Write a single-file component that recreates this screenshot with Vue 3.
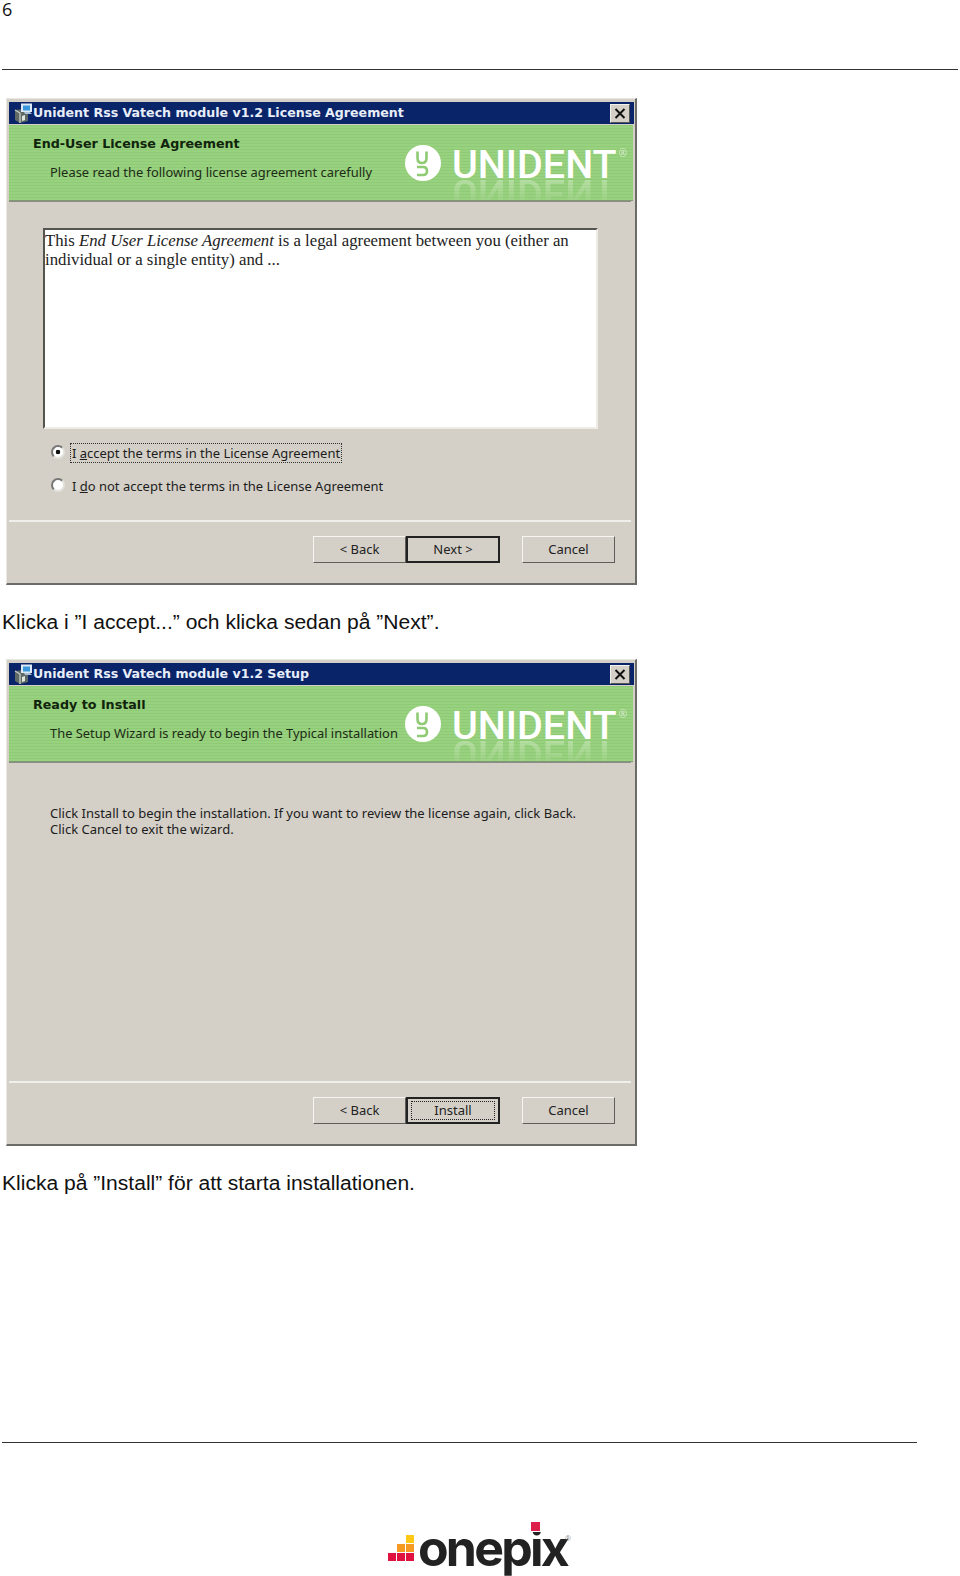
<template>
  <div class="page">
    <div class="page-head">6</div>

    <template v-for="d in dialogs" :key="d.title">
      <div class="dialog">
        <div class="titlebar">
          <svg class="titlebar__icon" width="20" height="20" viewBox="0 0 20 20">
            <path d="M2 7l8-1 5 3v9l-8 2-5-3z" fill="#5f6a66" />
            <path d="M2 7l5 3v10" fill="none" stroke="#c5cdc8" stroke-width="1.3" />
            <path d="M9 13l3-1v5l-3 1z" fill="#dfe6df" />
            <rect x="8" y="0.5" width="11" height="8.5" fill="#dce8f4" />
            <rect x="10" y="2.5" width="7" height="5" fill="#3b97dc" />
            <path d="M11 9h6l2 2h-7z" fill="#a9c0d6" />
          </svg>
          <span class="titlebar__text">{{ d.title }}</span>
          <button class="titlebar__close">
            <svg width="12" height="11" viewBox="0 0 12 11">
              <path d="M1.5 1l9 9M10.5 1l-9 9" stroke="#111" stroke-width="2" />
            </svg>
          </button>
        </div>

        <div class="banner">
          <div class="banner__text">
            <div class="banner__heading">{{ d.heading }}</div>
            <div class="banner__sub">{{ d.sub }}</div>
          </div>
          <div class="logo">
            <svg width="36" height="36" viewBox="0 0 36 36">
              <circle cx="18" cy="18" r="18" fill="#fff" />
              <path d="M12.5 6.5V13q0 5 4.5 5t4.5-5V6.5" fill="none" stroke="#8fca74" stroke-width="2.6" />
              <path d="M12 22h6q4 0 4 4t-4 4h-6" fill="none" stroke="#8fca74" stroke-width="2.6" />
            </svg>
            <div class="logo__word">UNIDENT</div>
            <sup class="logo__reg">®</sup>
          </div>
        </div>

        <div class="content">
          <template v-if="d.license">
            <div class="license">
              This <em>End User License Agreement</em> is a legal agreement between you (either an<br />
              individual or a single entity) and ...
            </div>
            <div class="radio-row radio-row--first">
              <span class="radio radio--on"></span>
              <span class="radio-label radio-label--focus">I <u>a</u>ccept the terms in the License Agreement</span>
            </div>
            <div class="radio-row">
              <span class="radio"></span>
              <span class="radio-label">I <u>d</u>o not accept the terms in the License Agreement</span>
            </div>
          </template>
          <div v-else class="message">
            Click Install to begin the installation. If you want to review the license again, click Back.<br />
            Click Cancel to exit the wizard.
          </div>
        </div>

        <div class="footer">
          <button class="btn">&lt; Back</button>
          <button class="btn btn--default">
            <span :class="{ 'btn__focus': !d.license }">{{ d.next }}</span>
          </button>
          <button class="btn btn--cancel">Cancel</button>
        </div>
      </div>
      <p class="caption">{{ d.caption }}</p>
    </template>

    <div class="page-foot"></div>
    <div class="brand">
      <div class="brand__bars">
        <i class="bar bar--y"></i>
        <i class="bar bar--o"></i><i class="bar bar--o"></i>
        <i class="bar bar--r"></i><i class="bar bar--r"></i><i class="bar bar--r"></i>
      </div>
      <div class="brand__word">onep<span class="brand__i">i<b class="brand__dot"></b></span>x</div>
      <span class="brand__reg">®</span>
    </div>
  </div>
</template>

<script setup>
const dialogs = [
  {
    title: 'Unident Rss Vatech module v1.2 License Agreement',
    heading: 'End-User License Agreement',
    sub: 'Please read the following license agreement carefully',
    license: true,
    next: 'Next >',
    caption: 'Klicka i ”I accept...” och klicka sedan på ”Next”.',
  },
  {
    title: 'Unident Rss Vatech module v1.2 Setup',
    heading: 'Ready to Install',
    sub: 'The Setup Wizard is ready to begin the Typical installation',
    license: false,
    next: 'Install',
    caption: 'Klicka på ”Install” för att starta installationen.',
  },
];
</script>

<style>
body {
  margin: 0;
  background: #fff;
}
</style>

<style scoped>
.page {
  width: 960px;
  height: 1576px;
  box-sizing: border-box;
  padding: 0 0 0 2px;
  font-family: "Liberation Sans", Arial, sans-serif;
  color: #111;
}
.page-head {
  width: 956px;
  height: 69px;
  border-bottom: 1px solid #333;
  margin-bottom: 28px;
  font-family: "Open Sans", sans-serif;
  font-size: 18px;
  line-height: 18px;
}
.dialog {
  width: 631px;
  height: 487px;
  margin-left: 4px;
  box-sizing: border-box;
  padding: 3px 1px 3px 2px;
  display: flex;
  flex-direction: column;
  background: #d4d0c8;
  border: 1px solid #e9e7e2;
  border-right: 2px solid #6b6b68;
  border-bottom: 2px solid #6b6b68;
  font-family: "Noto Sans", sans-serif;
  color: #1c1c1c;
}
.titlebar {
  height: 22px;
  flex: none;
  display: flex;
  align-items: center;
  background: #0a246a;
  color: #e8eef8;
  font-family: "DejaVu Sans", sans-serif;
  font-weight: 700;
  font-size: 12.6px;
}
.titlebar__icon {
  margin: 0 0 0 4px;
}
.titlebar__text {
  margin-top: -2px;
}
.titlebar__close {
  margin-left: auto;
  margin-right: 4px;
  width: 20px;
  height: 19px;
  padding: 0;
  display: flex;
  align-items: center;
  justify-content: center;
  background: #d4d0c8;
  border: 1px solid;
  border-color: #f2f1ed #555 #555 #f2f1ed;
}
.banner {
  height: 75px;
  flex: none;
  margin-top: 1px;
  margin-right: 1px;
  position: relative;
  overflow: hidden;
  display: flex;
  justify-content: space-between;
  background: repeating-linear-gradient(#8fca74 0 1px, #98d17f 1px 3px);
  border-bottom: 1px solid #7f9a72;
}
.banner__text {
  padding-left: 24px;
  white-space: nowrap;
}
.banner__heading {
  margin-top: 10px;
  font-family: "DejaVu Sans", sans-serif;
  font-weight: 700;
  font-size: 12.7px;
  line-height: 18px;
  color: #10240c;
}
.banner__sub {
  margin: 10px 0 0 17px;
  font-size: 12.9px;
  line-height: 18px;
  color: #1c2c16;
}
.logo {
  display: flex;
  align-items: flex-start;
  padding: 20px 6px 0 0;
  color: #fff;
}
.logo svg {
  margin-right: 11px;
}
.logo__word {
  position: relative;
  font-family: "Roboto", sans-serif;
  font-weight: 500;
  font-size: 39.5px;
  line-height: 40px;
}
.logo__word::after {
  content: "UNIDENT";
  position: absolute;
  left: 0;
  top: 0;
  transform-origin: 0 34px;
  transform: scaleY(-1);
  opacity: 0.3;
  -webkit-mask-image: linear-gradient(transparent 20%, #000 85%);
  mask-image: linear-gradient(transparent 20%, #000 85%);
}
.logo__reg {
  font-size: 10px;
  line-height: 10px;
  opacity: 0.6;
  margin: 3px 0 0 2px;
}
.content {
  flex: 1;
  min-height: 0;
  margin-right: 3px;
  border-top: 1px solid #f0efeb;
  border-bottom: 2px solid;
  border-image: linear-gradient(#8d8b85 50%, #f0efeb 50%) 2;
}
.license {
  margin: 26px 0 0 34px;
  width: 555px;
  height: 201px;
  box-sizing: border-box;
  padding: 1px 0;
  background: #fff;
  border: 2px solid;
  border-color: #55554f #eeece6 #eeece6 #55554f;
  font-family: "Liberation Serif", serif;
  font-size: 16.75px;
  line-height: 19px;
  color: #222;
}
.radio-row {
  display: flex;
  align-items: center;
  margin: 15px 0 0 42px;
  height: 18px;
  font-size: 12.97px;
}
.radio {
  width: 14px;
  height: 14px;
  flex: none;
  margin-right: 5px;
  margin-top: -3px;
  box-sizing: border-box;
  border-radius: 50%;
  background: #fff;
  border: 2px solid;
  border-color: #777 #e4e2dc #e4e2dc #777;
}
.radio--on {
  background: radial-gradient(circle, #111 0 2px, #fff 2.6px);
}
.radio-label {
  padding: 0 1px;
  line-height: 18px;
  border: 1px dotted transparent;
}
.radio-label--focus {
  border-color: #333;
}
.message {
  padding: 42px 0 0 41px;
  font-size: 13px;
  line-height: 16px;
}
.footer {
  flex: none;
  height: 58px;
  display: flex;
  padding: 14px 0 0 304px;
  box-sizing: border-box;
}
.btn {
  width: 93px;
  height: 27px;
  box-sizing: border-box;
  padding: 0 0 1px;
  display: flex;
  align-items: center;
  justify-content: center;
  background: #d4d0c8;
  border: 1px solid;
  border-color: #f6f5f2 #605e5a #605e5a #f6f5f2;
  font-family: "Noto Sans", sans-serif;
  font-size: 13px;
  color: #222;
}
.btn--default {
  width: 94px;
  border: 2px solid #222;
}
.btn--cancel {
  margin-left: 22px;
}
.btn__focus {
  width: 84px;
  height: 19px;
  line-height: 17px;
  box-sizing: border-box;
  border: 1px dotted #222;
}
.caption {
  margin: 25px 0 25px;
  height: 24px;
  font-size: 21.05px;
  line-height: 24px;
  color: #111;
}
.page-foot {
  width: 915px;
  border-bottom: 1px solid #333;
  margin-top: 247px;
}
.brand {
  position: relative;
  display: flex;
  align-items: flex-start;
  margin: 80px 0 0 386px;
}
.brand__bars {
  display: grid;
  grid-template-columns: repeat(3, 8px);
  grid-template-rows: repeat(3, 8px);
  gap: 1px;
  margin-top: 12px;
  margin-right: 4px;
}
.bar {
  display: block;
}
.bar--y {
  grid-column: 3;
  background: #ffc816;
}
.bar--o {
  background: #f59a23;
}
.bar--o:nth-of-type(2) {
  grid-column: 2;
}
.bar--r {
  background: #e0123f;
}
.brand__word {
  font-family: "Inter", sans-serif;
  font-weight: 700;
  font-size: 50px;
  line-height: 50px;
  letter-spacing: -2.8px;
  color: #222;
}
.brand__i {
  position: relative;
}
.brand__dot {
  position: absolute;
  left: 1px;
  top: 4px;
  width: 9px;
  height: 9px;
  background: #dc1f4b;
  box-shadow: 0 0 0 1px #fff;
}
.brand__reg {
  position: absolute;
  left: 177px;
  top: 11px;
  font-size: 8px;
  line-height: 10px;
  color: #888;
}
</style>
